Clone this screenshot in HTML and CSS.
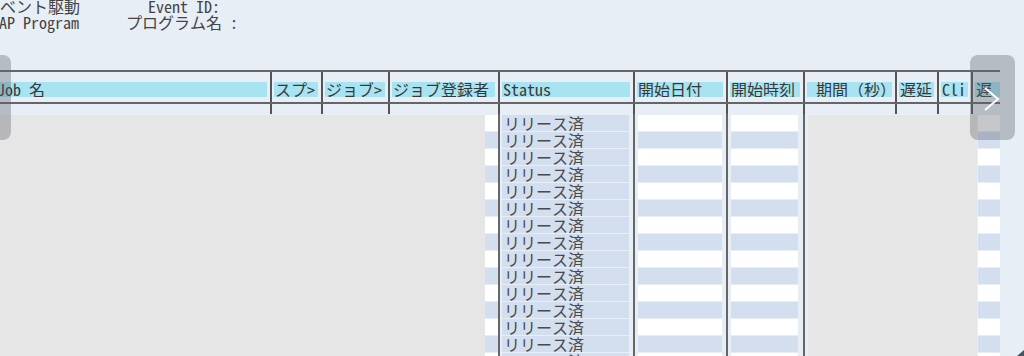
FILE: index.html
```html
<!DOCTYPE html>
<html lang="ja">
<head>
  <meta charset="UTF-8" />
  <title>ジョブ一覧</title>
  <link rel="stylesheet" href="styles.css">
</head>
<body>

<div class="info">
  <div class="info-row"><span class="key key-event">イベント駆動</span><span>Event ID:</span></div>
  <div class="info-row"><span class="key key-prog">SAP Program</span><span>プログラム名 :</span></div>
</div>

<div class="list">
  <div class="head">
    <div class="hc c-job"><span>Job 名</span></div>
    <div class="hc c-spool"><span>スプ&gt;</span></div>
    <div class="hc c-jobdoc"><span>ジョブ&gt;</span></div>
    <div class="hc c-user"><span>ジョブ登録者</span></div>
    <div class="hc c-status"><span>Status</span></div>
    <div class="hc c-date"><span>開始日付</span></div>
    <div class="hc c-time"><span>開始時刻</span></div>
    <div class="hc c-dur"><span>&nbsp;期間（秒）</span></div>
    <div class="hc c-delay"><span>遅延</span></div>
    <div class="hc c-cli"><span>Cli</span></div>
    <div class="hc c-last"><span>遅</span></div>
  </div>
  <div class="stubs">
    <div class="hc c-job"></div>
    <div class="hc c-spool"></div>
    <div class="hc c-jobdoc"></div>
    <div class="hc c-user"></div>
    <div class="hc c-status"></div>
    <div class="hc c-date"></div>
    <div class="hc c-time"></div>
    <div class="hc c-dur"></div>
    <div class="hc c-delay"></div>
    <div class="hc c-cli"></div>
    <div class="hc c-last"></div>
  </div>
  <div class="rows">
    <div class="blank blank-left"></div>
    <div class="stripe stripe-left" id="stripeL"></div>
    <div class="col col-status" id="colStatus"></div>
    <div class="col col-date" id="colDate"></div>
    <div class="col col-time" id="colTime"></div>
    <div class="col col-rest">
      <div class="blank blank-right"></div>
      <div class="stripe stripe-right" id="stripeR"></div>
    </div>
  </div>
</div>

<div class="pager pager-left"></div>
<div class="pager pager-right">
  <svg width="45" height="85" viewBox="0 0 45 85"><polyline points="15,33 28,44 15,55" fill="none" stroke="#fff" stroke-width="2"/></svg>
</div>
<span class="scroll-arrow"></span>

<script>
  const ROWS = 15;

  function fill(id, make) {
    const col = document.getElementById(id);
    for (let i = 0; i < ROWS; i++) {
      const cell = document.createElement("div");
      make(cell, i);
      col.appendChild(cell);
    }
  }

  const striped = (cell, i) => { cell.className = "cell " + (i % 2 ? "alt" : "plain"); };

  fill("stripeL", striped);
  fill("colDate", striped);
  fill("colTime", striped);
  fill("stripeR", striped);
  fill("colStatus", cell => {
    cell.className = "cell alt";
    cell.textContent = "リリース済";
  });
</script>

</body>
</html>
```

FILE: styles.css
```css
html, body {
  margin: 0;
  padding: 0;
  width: 1024px;
  height: 356px;
  overflow: hidden;
}

body {
  font-family: "Noto Sans Mono CJK JP", "Noto Sans CJK JP", "DejaVu Sans Mono", monospace;
  font-size: 16px;
  background: #e8eef6;
  color: #444;
  position: relative;
}

.info {
  height: 72px;
  margin-top: -2px;
}

.info-row {
  display: flex;
  line-height: 16px;
  height: 16px;
  white-space: pre;
}

.key-event {
  width: 164px;
  margin-left: -16px;
}

.key-prog {
  width: 135px;
  margin-left: -9px;
}

.list {
  margin-left: -12px;
  width: 1012px;
}

.head,
.stubs {
  display: flex;
}

.head {
  border-top: 2px solid #666;
  border-bottom: 2px solid #666;
  height: 30px;
}

.stubs {
  height: 10px;
}

.hc {
  box-sizing: border-box;
  border-left: 2px solid #555;
  padding: 10px 3px 0 2px;
  flex: none;
}

.stubs .hc {
  padding: 0;
}

.hc span {
  display: block;
  height: 15px;
  line-height: 15px;
  background: #a7e3f1;
  color: #383838;
  white-space: pre;
  overflow: hidden;
  padding-left: 1px;
}

.c-job { width: 282px; border-left-color: transparent; }
.c-job span { padding-left: 5px; }
.c-spool { width: 51px; }
.c-jobdoc { width: 67px; }
.c-user { width: 110px; }
.c-status { width: 135px; }
.c-date { width: 93px; }
.c-time { width: 77px; }
.c-dur { width: 92px; }
.c-delay { width: 42px; }
.c-cli { width: 34px; }
.c-last { width: 29px; padding-right: 0; }

.rows {
  display: flex;
  height: 250px;
  padding-top: 1px;
  overflow: hidden;
}

.blank {
  background: #e6e6e6;
  flex: none;
}

.blank-left {
  width: 497px;
}

.blank-right {
  width: 169px;
  margin-right: 1px;
}

.stripe {
  flex: none;
}

.stripe-left {
  width: 13px;
}

.stripe-right {
  width: 22px;
}

.col {
  box-sizing: border-box;
  border-left: 2px solid #666;
  flex: none;
  margin-top: -1px;
  padding-top: 1px;
}

.col-status {
  width: 135px;
  padding-left: 2px;
  padding-right: 4px;
}

.col-date {
  width: 93px;
  padding-left: 3px;
  padding-right: 4px;
}

.col-time {
  width: 77px;
  padding-left: 3px;
  padding-right: 5px;
}

.col-rest {
  width: 197px;
  padding-left: 3px;
  display: flex;
}

.cell {
  height: 16px;
  margin-bottom: 1px;
  line-height: 16px;
  white-space: pre;
  overflow: hidden;
}

.col-status .cell {
  padding-left: 2px;
  color: #4a4a4a;
}

.plain {
  background: #fff;
}

.alt {
  background: #d3dfef;
}

.pager {
  position: absolute;
  top: 55px;
  height: 85px;
  border-radius: 8px;
  background: rgba(95, 100, 108, 0.36);
}

.pager-left {
  left: -35px;
  width: 46px;
}

.pager-right {
  left: 970px;
  width: 45px;
}

.pager svg {
  display: block;
}

.scroll-arrow {
  position: absolute;
  right: 0;
  bottom: 0;
  width: 0;
  height: 0;
  border-left: 7px solid transparent;
  border-bottom: 6px solid #455566;
}
```
